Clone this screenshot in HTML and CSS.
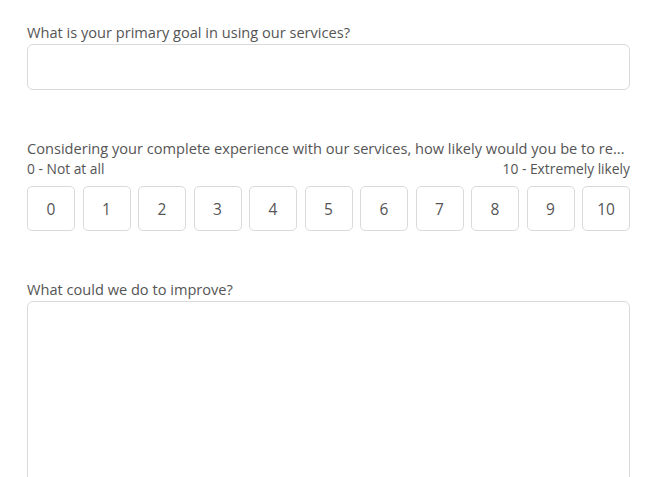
FILE: index.html
```html
<!DOCTYPE html>
<html lang="en">
<head>
  <meta charset="UTF-8" />
  <title>Survey</title>
  <link rel="stylesheet" href="styles.css">
</head>
<body>
  <form class="survey">
    <!-- Question 1 -->
    <div class="question">
      <label class="label" for="goal">What is your primary goal in using our services?</label>
      <input class="text-input" id="goal" type="text" />
    </div>

    <!-- Question 2: NPS scale -->
    <div class="question">
      <div class="label">Considering your complete experience with our services, how likely would you be to re...</div>
      <div class="scale-labels">
        <span>0 - Not at all</span>
        <span>10 - Extremely likely</span>
      </div>
      <div class="scale">
        <button type="button">0</button>
        <button type="button">1</button>
        <button type="button">2</button>
        <button type="button">3</button>
        <button type="button">4</button>
        <button type="button">5</button>
        <button type="button">6</button>
        <button type="button">7</button>
        <button type="button">8</button>
        <button type="button">9</button>
        <button type="button">10</button>
      </div>
    </div>

    <!-- Question 3 -->
    <div class="question">
      <label class="label" for="improve">What could we do to improve?</label>
      <textarea class="text-area" id="improve"></textarea>
    </div>
  </form>
</body>
</html>
```

FILE: styles.css
```css
* {
  margin: 0;
  padding: 0;
  box-sizing: border-box;
}

html, body {
  height: 100%;
  overflow: hidden;
}

body {
  font-family: "Open Sans", Arial, sans-serif;
  font-size: 14.6px;
  color: #555;
  background-color: #fff;
}

.survey {
  width: 603px;
  margin-left: 27px;
  padding-top: 22px;
}

.question {
  margin-bottom: 48px;
}

.label {
  display: block;
  line-height: 20px;
  margin-bottom: 2px;
  white-space: nowrap;
}

.text-input {
  display: block;
  width: 100%;
  height: 46px;
  border: 1px solid #dadada;
  border-radius: 6px;
  outline: none;
}

/* Scale */
.scale-labels {
  display: flex;
  justify-content: space-between;
  font-size: 13.8px;
  line-height: 18px;
  margin-top: 2px;
  margin-bottom: 8px;
}

.scale {
  display: flex;
  justify-content: space-between;
}
.scale button {
  width: 48px;
  height: 45px;
  background: #fff;
  border: 1px solid #dadada;
  border-radius: 5px;
  font-family: inherit;
  font-size: 15.5px;
  color: #555;
  cursor: pointer;
}

.text-area {
  display: block;
  width: 100%;
  height: 200px;
  border: 1px solid #dadada;
  border-radius: 6px;
  resize: none;
  outline: none;
}
```
